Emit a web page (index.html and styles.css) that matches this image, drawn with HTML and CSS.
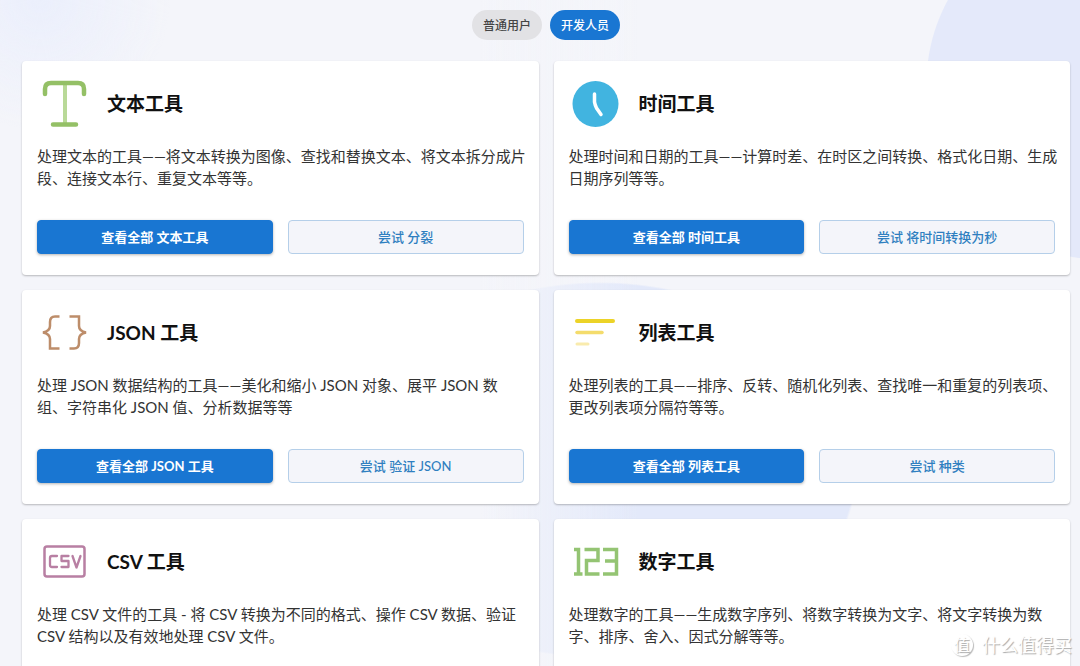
FILE: index.html
```html
<!DOCTYPE html>
<html lang="zh-CN">

<head>
  <meta charset="UTF-8">
  <meta name="viewport" content="width=device-width, initial-scale=1.0">
  <title>开发人员工具</title>
  <link rel="stylesheet" href="styles.css">
</head>

<body>
  <nav class="tabs">
    <button type="button" class="tab">普通用户</button>
    <button type="button" class="tab active">开发人员</button>
  </nav>

  <main class="cards">
    <section class="card">
      <div class="card-head">
        <svg class="icon" viewBox="0 0 56 56" fill="none" stroke-linecap="round">
          <path d="M28 8V47" stroke="#b9d998" stroke-width="4"/>
          <path d="M8 18V13Q8 7 14 7H41Q47 7 47 13V18M16 48.500H39" stroke="#94c066" stroke-width="4.500"/>
        </svg>
        <h2>文本工具</h2>
      </div>
      <p>处理文本的工具——将文本转换为图像、查找和替换文本、将文本拆分成片段、连接文本行、重复文本等等。</p>
      <div class="btns">
        <a class="btn primary" href="#">查看全部 文本工具</a>
        <a class="btn" href="#">尝试 分裂</a>
      </div>
    </section>

    <section class="card">
      <div class="card-head">
        <svg class="icon" viewBox="0 0 56 56" fill="none">
          <circle cx="26.500" cy="28" r="23" fill="#41b4e0"/>
          <path d="M25.500 18V26Q26 29 27.500 32L32 38.500" stroke="#fff" stroke-width="3.500" stroke-linecap="round"/>
        </svg>
        <h2>时间工具</h2>
      </div>
      <p>处理时间和日期的工具——计算时差、在时区之间转换、格式化日期、生成日期序列等等。</p>
      <div class="btns">
        <a class="btn primary" href="#">查看全部 时间工具</a>
        <a class="btn" href="#">尝试 将时间转换为秒</a>
      </div>
    </section>

    <section class="card">
      <div class="card-head">
        <svg class="icon" viewBox="0 0 56 56" fill="none" stroke="#bd8d6a" stroke-width="2.500">
          <path d="M22.500 11.500H18Q13 11.500 13 17V21Q13 26 6 27.500Q13 29 13 34V43.500H22.500"/>
          <path d="M32.500 11.500H42V21Q42 26 49 27.500Q42 29 42 34V38Q42 43.500 37 43.500H32.500"/>
        </svg>
        <h2>JSON 工具</h2>
      </div>
      <p>处理 JSON 数据结构的工具——美化和缩小 JSON 对象、展平 JSON 数组、字符串化 JSON 值、分析数据等等</p>
      <div class="btns">
        <a class="btn primary" href="#">查看全部 JSON 工具</a>
        <a class="btn" href="#">尝试 验证 JSON</a>
      </div>
    </section>

    <section class="card">
      <div class="card-head">
        <svg class="icon" viewBox="0 0 56 56" fill="none" stroke-linecap="round">
          <path d="M8 16H44" stroke="#ecd328" stroke-width="4"/>
          <path d="M8 27.500H33" stroke="#f4dc6c" stroke-width="3.500"/>
          <path d="M8 39H19" stroke="#f9ebad" stroke-width="3"/>
        </svg>
        <h2>列表工具</h2>
      </div>
      <p>处理列表的工具——排序、反转、随机化列表、查找唯一和重复的列表项、更改列表项分隔符等等。</p>
      <div class="btns">
        <a class="btn primary" href="#">查看全部 列表工具</a>
        <a class="btn" href="#">尝试 种类</a>
      </div>
    </section>

    <section class="card">
      <div class="card-head">
        <svg class="icon" viewBox="0 0 56 56" fill="none" stroke="#b87fa3" stroke-linecap="round" stroke-linejoin="round">
          <rect x="7.500" y="12.500" width="40" height="30" rx="2.500" stroke-width="2.500"/>
          <path d="M20 22H15Q13 22 13 24V31Q13 33 15 33H20M31.500 22H24.500V27H31.500V33H24.500M35.500 22L39.500 33.500L43.500 22" stroke-width="2.300"/>
        </svg>
        <h2>CSV 工具</h2>
      </div>
      <p>处理 CSV 文件的工具 - 将 CSV 转换为不同的格式、操作 CSV 数据、验证 CSV 结构以及有效地处理 CSV 文件。</p>
      <div class="btns">
        <a class="btn primary" href="#">查看全部 CSV 工具</a>
        <a class="btn" href="#">尝试 CSV 到 JSON</a>
      </div>
    </section>

    <section class="card">
      <div class="card-head">
        <svg class="icon" viewBox="0 0 56 56" fill="none" stroke="#94c473" stroke-width="3.500">
          <path d="M5 15.500H9.500V41M5 40H13.500M15.500 15.500H29V26.500H17.500V40H30.500M34 15.500H47.500V40H34M36 27H47"/>
        </svg>
        <h2>数字工具</h2>
      </div>
      <p>处理数字的工具——生成数字序列、将数字转换为文字、将文字转换为数字、排序、舍入、因式分解等等。</p>
      <div class="btns">
        <a class="btn primary" href="#">查看全部 数字工具</a>
        <a class="btn" href="#">尝试 生成总和</a>
      </div>
    </section>
  </main>

  <div class="watermark"><span>值</span>什么值得买</div>
</body>

</html>
```

FILE: styles.css
```css
* {
  box-sizing: border-box;
}
html {
  height: 100%;
  overflow: hidden;
}
body {
  margin: 0;
  min-height: 100%;
  padding: 10px 10px 0 22px;
  font-family: Lato, "Noto Sans CJK SC", sans-serif;
  color: #333;
  background:
    radial-gradient(circle at 40px 0, #ebeffc 0, rgba(235,239,252,0) 130px),
    radial-gradient(circle at 1102px 84px, #e4e9fa 175px, rgba(228,233,250,0) 176px),
    linear-gradient(to right, #f4f5fa 480px, rgba(244,245,250,0) 640px),
    radial-gradient(257px 188px at 600px 470px, #e3e9fa 99%, rgba(227,233,250,0) 100%),
    #f4f5fa;
}
.tabs {
  display: flex;
  justify-content: center;
  gap: 8px;
}
.tab {
  height: 30px;
  padding: 0 11px 2px;
  border: 0;
  border-radius: 15px;
  background: #e2e2e5;
  color: #444;
  font-family: inherit;
  font-size: 12px;
  font-weight: 500;
}
.tab.active {
  background: #1976d2;
  color: #fff;
}
.cards {
  display: grid;
  grid-template-columns: 1fr 1fr;
  gap: 15px;
  margin-top: 21px;
}
.card {
  padding: 15px 15px 21px;
  background: #fff;
  border-radius: 4px;
  box-shadow: 0 1px 2px rgba(0,0,0,0.25);
}
.card-head {
  display: flex;
  align-items: center;
  gap: 14px;
}
.icon {
  width: 56px;
  height: 56px;
}
h2 {
  margin: 0;
  font-size: 19px;
  line-height: 28px;
  font-weight: 700;
  color: #111;
}
p {
  margin: 13px -3px 31px 0;
  font-size: 15px;
  line-height: 22px;
}
.btns {
  display: grid;
  grid-template-columns: 1fr 1fr;
  gap: 15px;
}
.btn {
  height: 34px;
  border: 1px solid #b5cfe9;
  border-radius: 4px;
  background: #f4f5fa;
  color: #2f7fc0;
  font-size: 13px;
  font-weight: 500;
  line-height: 32px;
  text-align: center;
  text-decoration: none;
}
.btn.primary {
  border-color: #1976d2;
  background: #1976d2;
  color: #fff;
  font-weight: 700;
  box-shadow: 0 1px 3px rgba(0,0,0,0.3);
}
/* 右下角水印 */
.watermark {
  position: absolute;
  right: 8px;
  bottom: 8px;
  display: flex;
  align-items: center;
  gap: 9px;
  color: #fff;
  font-size: 18px;
  line-height: 26px;
  text-shadow: 1px 1px 1px #aaa;
}
.watermark span {
  width: 22px;
  height: 22px;
  border-radius: 50%;
  font-size: 16px;
  line-height: 22px;
  text-align: center;
  box-shadow: 1px 1px 1px #bbb;
}
```
